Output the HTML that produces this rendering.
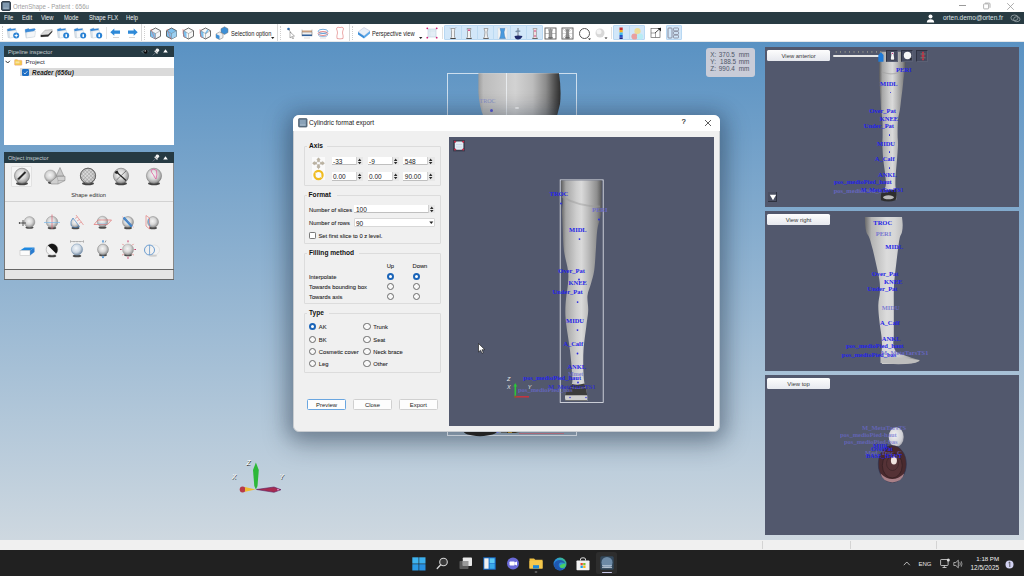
<!DOCTYPE html>
<html><head><meta charset="utf-8">
<style>
*{margin:0;padding:0;box-sizing:border-box}
html,body{width:1024px;height:576px;overflow:hidden;background:#fff}
body{font-family:"Liberation Sans",sans-serif;position:relative}
.a{position:absolute}
.t{position:absolute;white-space:nowrap;line-height:1}
</style></head><body>
<!-- ===== MAIN BG ===== -->
<div class="a" style="left:0;top:42px;width:1024px;height:498px;background:linear-gradient(#5a92c3,#ced8e0)"></div>
<!-- center leg top -->
<div class="a" style="left:446.6px;top:72.6px;width:130px;height:50px;border:0.6px solid rgba(225,235,245,.85);border-bottom:none"></div>
<svg class="a" style="left:476px;top:72px" width="90" height="46"><defs><linearGradient id="lg1" x1="0" x2="1"><stop offset="0" stop-color="#9c9c9c"/><stop offset="0.06" stop-color="#bcbcbc"/><stop offset="0.45" stop-color="#d2d2d2"/><stop offset="0.66" stop-color="#bdbdbd"/><stop offset="0.82" stop-color="#8c8c8c"/><stop offset="0.93" stop-color="#505050"/><stop offset="1" stop-color="#2e2e2e"/></linearGradient></defs><path d="M2.4 1.3H83Q85.5 18 84 32Q82 40 80.5 46H8Q3 34 2.4 20Z" fill="url(#lg1)"/></svg>
<div class="a" style="left:506.3px;top:73px;width:0.7px;height:45px;background:rgba(235,238,242,.9)"></div>
<div class="t" style="left:479.5px;top:98px;font-size:6px;color:#8890c8;font-family:'Liberation Serif',serif">TROC</div>
<div class="a" style="left:490px;top:108.5px;width:3px;height:3px;border-radius:50%;background:#5a5ad8"></div>
<div class="a" style="left:515px;top:107px;width:4px;height:1.6px;border-radius:50%;background:#f4f4f4"></div>
<!-- dialog shadow -->
<div class="a" style="left:293px;top:115px;width:427px;height:316px;border-radius:6px;box-shadow:0 0 16px 6px rgba(30,50,80,.17),0 8px 26px 4px rgba(20,30,45,.36)"></div>
<!-- foot bottom below dialog -->
<div class="a" style="left:447px;top:425px;width:130px;height:10.5px;border:0.6px solid rgba(200,206,214,.9);border-top:none"></div>
<svg class="a" style="left:460px;top:430px" width="70" height="7"><path d="M3 0.5Q4 5.5 20 6.2Q36 5.5 38 0.5Z" fill="#222"/><circle cx="37.5" cy="2" r="1" fill="#6a6ae0"/><path d="M41 1.8H47M47 2.3H55Q58 1.5 61 1.5" stroke="#3a3020" stroke-width="1.2"/><path d="M48 2.5H52" stroke="#b09030" stroke-width="0.8"/></svg>
<div class="a" style="left:519px;top:432.8px;width:45px;height:0.9px;background:#a86878"></div>
<!-- axis triad -->
<svg class="a" style="left:230px;top:456px" width="60" height="40"><path d="M25.9 6.5L28.8 14L27.5 30L25.9 33.5L24.3 30L23 14Z" fill="#2db838"/><circle cx="12.6" cy="33.5" r="2.9" fill="#b83a48"/><path d="M15 31L25.5 33.4L15 35.8Z" fill="#f0bc30"/><path d="M26.5 33.5L44 31L51 33.7L44 36.3Z" fill="#a62a50" stroke="#5a2060" stroke-width="0.6"/><circle cx="48" cy="33.6" r="0.9" fill="#e890d0"/></svg>
<div class="t" style="left:246.5px;top:459.5px;font-size:6.5px;color:#fff;font-style:italic;text-shadow:0.5px 0.5px 0.6px #333">Z</div>
<div class="t" style="left:232px;top:474px;font-size:6.5px;color:#fff;font-style:italic;text-shadow:0.5px 0.5px 0.6px #333">X</div>
<div class="t" style="left:279.5px;top:474px;font-size:6.5px;color:#fff;font-style:italic;text-shadow:0.5px 0.5px 0.6px #333">Y</div>
<!-- coordinate box -->
<div class="a" style="left:706.2px;top:48.4px;width:48.8px;height:28.4px;border-radius:3px;background:#c9ccd8"></div>
<div class="t" style="left:710.3px;top:51.8px;font-size:6.4px;color:#4e5666;line-height:6.9px">X:<br>Y:<br>Z:</div>
<div class="t" style="left:718.8px;top:51.8px;font-size:6.4px;color:#4e5666;line-height:6.9px">370.5<br>&thinsp;188.5<br>990.4</div>
<div class="t" style="left:738.8px;top:51.8px;font-size:6.4px;color:#4e5666;line-height:6.9px">mm<br>mm<br>mm</div>
<!-- ===== STATUS BAR ===== -->
<div class="a" style="left:0;top:540px;width:1024px;height:10px;background:#f0f0f0"></div>
<div class="a" style="left:761.5px;top:541px;width:0.6px;height:8px;background:#d4d4d4"></div>
<div class="a" style="left:849.5px;top:541px;width:0.6px;height:8px;background:#d4d4d4"></div>
<div class="a" style="left:936px;top:541px;width:0.6px;height:8px;background:#d4d4d4"></div>
<!-- ===== TITLE BAR ===== -->
<div class="a" style="left:0;top:0;width:1024px;height:12px;background:#fff"></div>
<svg class="a" style="left:1px;top:1.3px" width="10" height="10"><rect x="0.5" y="0.5" width="9" height="9" rx="1.5" fill="#4a5e70" stroke="#34404c"/><rect x="1.8" y="1.8" width="6.4" height="6.4" fill="#7f98ae"/><path d="M2.5 7.2H7.5" stroke="#c8d4de" stroke-width="0.5"/></svg>
<div class="t" style="left:12.5px;top:3.7px;font-size:6.9px;color:#a0a0a0;transform:scaleX(0.885);transform-origin:0 0">OrtenShape - Patient : 656u</div>
<div class="a" style="left:959px;top:5px;width:7px;height:0.9px;background:#9a9a9a"></div>
<svg class="a" style="left:982.5px;top:2.3px" width="8" height="8"><rect x="0.6" y="1.9" width="5" height="5" rx="0.6" fill="none" stroke="#a0a0a0" stroke-width="0.8"/><path d="M2 1.1H6.2Q7 1.1 7 1.9V5.8" fill="none" stroke="#a0a0a0" stroke-width="0.8"/></svg>
<svg class="a" style="left:1006px;top:1.5px" width="9" height="9"><path d="M1.2 1.2L7.8 7.8M7.8 1.2L1.2 7.8" stroke="#999" stroke-width="0.8"/></svg>

<!-- ===== MENU BAR ===== -->
<div class="a" style="left:0;top:12px;width:1024px;height:12px;background:#283b43"></div>
<div class="t" style="left:4.4px;top:15.1px;font-size:6.6px;color:#eef0f2;transform:scaleX(0.88);transform-origin:0 0">File</div>
<div class="t" style="left:22.3px;top:15.1px;font-size:6.6px;color:#eef0f2;transform:scaleX(0.88);transform-origin:0 0">Edit</div>
<div class="t" style="left:41.4px;top:15.1px;font-size:6.6px;color:#eef0f2;transform:scaleX(0.88);transform-origin:0 0">View</div>
<div class="t" style="left:63.7px;top:15.1px;font-size:6.6px;color:#eef0f2;transform:scaleX(0.88);transform-origin:0 0">Mode</div>
<div class="t" style="left:88.6px;top:15.1px;font-size:6.6px;color:#eef0f2;transform:scaleX(0.88);transform-origin:0 0">Shape FLX</div>
<div class="t" style="left:125.8px;top:15.1px;font-size:6.6px;color:#eef0f2;transform:scaleX(0.88);transform-origin:0 0">Help</div>
<svg class="a" style="left:926px;top:13.5px" width="9" height="9"><circle cx="4.5" cy="2.6" r="2" fill="#fff"/><path d="M0.8 8.6Q1 5.3 4.5 5.3Q8 5.3 8.2 8.6Z" fill="#fff"/></svg>
<div class="t" style="left:943px;top:15.2px;font-size:6.5px;color:#dfe4e7">orten.demo@orten.fr</div>
<svg class="a" style="left:1010px;top:13.5px" width="11" height="9"><ellipse cx="4.5" cy="3.8" rx="3.6" ry="2.8" fill="none" stroke="#9aa4aa" stroke-width="0.8"/><ellipse cx="6.8" cy="5.2" rx="3.2" ry="2.5" fill="none" stroke="#9aa4aa" stroke-width="0.8"/></svg>

<!-- ===== TOOLBAR ===== -->
<div class="a" style="left:0;top:24px;width:1024px;height:18px;background:#fff"></div>
<div class="a" style="left:0;top:40.7px;width:1024px;height:1.3px;background:#e6e8ea"></div>
<!-- dotted separators -->
<div class="a" style="left:2px;top:26px;width:1px;height:14px;border-left:1px dotted #cfcfcf"></div>
<div class="a" style="left:106px;top:27px;width:1px;height:12px;background:#e4e4e4"></div>
<div class="a" style="left:141px;top:24px;width:1px;height:17px;background:#d8d8d8"></div>
<div class="a" style="left:144px;top:26px;width:1px;height:14px;border-left:1px dotted #cfcfcf"></div>
<div class="a" style="left:276.5px;top:24px;width:1px;height:17px;background:#d8d8d8"></div>
<div class="a" style="left:279.5px;top:26px;width:1px;height:14px;border-left:1px dotted #cfcfcf"></div>
<div class="a" style="left:348.5px;top:24px;width:1px;height:17px;background:#d8d8d8"></div>
<div class="a" style="left:351.5px;top:26px;width:1px;height:14px;border-left:1px dotted #cfcfcf"></div>
<div class="a" style="left:441.5px;top:27px;width:1px;height:12px;background:#e0e0e0"></div>
<div class="a" style="left:611px;top:27px;width:1px;height:12px;background:#e0e0e0"></div>
<!-- folder icons -->
<svg class="a" style="left:6px;top:27px" width="14" height="12"><path d="M1.2 2.2L4.6 1.2L5.6 2L9.6 1.4L10 9.2L2.2 10.6Z" fill="#dfe6ee" stroke="#9fb0c0" stroke-width="0.4"/><path d="M1.2 2.2L4.6 1.2L5.6 2L9.6 1.4L9.4 3L1.6 4.2Z" fill="#3a8ad8"/><path d="M3.2 4.2L10.4 3.4L10.6 9.6L3.6 11.2Z" fill="#f6f8fa" stroke="#b8c4d0" stroke-width="0.35"/><circle cx="10.2" cy="8.6" r="3" fill="#2a82d4"/><path d="M10.2 6.4L10.8 8L12.4 8.6L10.8 9.2L10.2 10.8L9.6 9.2L8 8.6L9.6 8Z" fill="#fff"/></svg>
<svg class="a" style="left:24px;top:27px" width="13" height="12"><path d="M1 2.5L4.5 1.5L5.5 2.3L10.5 1.5L10.5 9.5L2 10.8Z" fill="#dfe6ee" stroke="#9fb0c0" stroke-width="0.4"/><path d="M1 2.5L4.5 1.5L5.5 2.3L10.5 1.5L11.8 2.2L9 4.8L1.4 5.6Z" fill="#3a8ad8"/><path d="M3 5.2L11.6 4L10.8 9.8L2.4 11Z" fill="#f4f6f8" stroke="#b8c4d0" stroke-width="0.35"/></svg>
<svg class="a" style="left:40px;top:28px" width="13" height="10"><path d="M0.8 6.8L5 2.2L12.2 1.6L12.2 3.8L8.2 8.4L0.8 8.8Z" fill="#dcdcdc" stroke="#888" stroke-width="0.4"/><path d="M0.8 7L8.2 6.6L12.2 2.8V4L8.2 8.4L0.8 8.9Z" fill="#2e2e2e"/></svg>
<svg class="a" style="left:56px;top:27px" width="14" height="12"><path d="M1.2 2.2L4.6 1.2L5.6 2L9.6 1.4L10 9.2L2.2 10.6Z" fill="#dfe6ee" stroke="#9fb0c0" stroke-width="0.4"/><path d="M1.2 2.2L4.6 1.2L5.6 2L9.6 1.4L9.4 3L1.6 4.2Z" fill="#3a8ad8"/><path d="M3.2 4.2L10.4 3.4L10.6 9.6L3.6 11.2Z" fill="#f6f8fa" stroke="#b8c4d0" stroke-width="0.35"/><circle cx="10.2" cy="8.6" r="3" fill="#2a82d4"/><rect x="9.4" y="7" width="1.6" height="3.2" rx="0.8" fill="#fff"/></svg>
<svg class="a" style="left:72.5px;top:27px" width="14" height="12"><path d="M1.2 2.2L4.6 1.2L5.6 2L9.6 1.4L10 9.2L2.2 10.6Z" fill="#dfe6ee" stroke="#9fb0c0" stroke-width="0.4"/><path d="M1.2 2.2L4.6 1.2L5.6 2L9.6 1.4L9.4 3L1.6 4.2Z" fill="#3a8ad8"/><path d="M3.2 4.2L10.4 3.4L10.6 9.6L3.6 11.2Z" fill="#f6f8fa" stroke="#b8c4d0" stroke-width="0.35"/><circle cx="10.2" cy="8.6" r="3" fill="#2a82d4"/><rect x="9.4" y="7" width="1.6" height="3.2" rx="0.8" fill="#fff"/></svg>
<svg class="a" style="left:89px;top:27px" width="14" height="12"><path d="M1.2 2.2L4.6 1.2L5.6 2L9.6 1.4L10 9.2L2.2 10.6Z" fill="#dfe6ee" stroke="#9fb0c0" stroke-width="0.4"/><path d="M1.2 2.2L4.6 1.2L5.6 2L9.6 1.4L9.4 3L1.6 4.2Z" fill="#3a8ad8"/><path d="M3.2 4.2L10.4 3.4L10.6 9.6L3.6 11.2Z" fill="#f6f8fa" stroke="#b8c4d0" stroke-width="0.35"/><circle cx="10.2" cy="8.6" r="3" fill="#2a82d4"/><rect x="9.4" y="7" width="1.6" height="3.2" rx="0.8" fill="#fff"/></svg>
<!-- arrows -->
<svg class="a" style="left:110px;top:28px" width="11" height="11"><path d="M0.3 4.2L4.3 0.6V2.6H10V5.8H4.3V7.8Z" fill="#2f8ad8"/><path d="M3 9.5H9" stroke="#bbb" stroke-width="0.6"/></svg>
<svg class="a" style="left:127px;top:28px" width="11" height="11"><path d="M10.7 4.2L6.7 0.6V2.6H1V5.8H6.7V7.8Z" fill="#2f8ad8"/><path d="M2 9.5H8" stroke="#bbb" stroke-width="0.6"/></svg>
<!-- hex cubes -->
<svg class="a" style="left:149px;top:26.5px" width="13" height="13"><path d="M6.5 1L11.5 3.7V9.3L6.5 12L1.5 9.3V3.7Z" fill="#f4f6f8" stroke="#444" stroke-width="0.8"/><path d="M1.5 3.7L6.5 6.5V12L1.5 9.3Z" fill="#7cc0ee"/><path d="M2 2L6 12" stroke="#e06060" stroke-width="0.5"/><path d="M6.5 6.5L1.8 3.9M6.5 6.5L11.2 3.9M6.5 6.5V11.8" stroke="#777" stroke-width="0.45"/></svg>
<svg class="a" style="left:165px;top:26.5px" width="13" height="13"><path d="M6.5 1L11.5 3.7V9.3L6.5 12L1.5 9.3V3.7Z" fill="#7cc0ee" stroke="#444" stroke-width="0.8"/><path d="M6.5 6.5V12L11.5 9.3V3.7Z" fill="#9cd0f2"/><path d="M2 2L6 12" stroke="#e06060" stroke-width="0.5"/><path d="M6.5 6.5L1.8 3.9M6.5 6.5L11.2 3.9M6.5 6.5V11.8" stroke="#777" stroke-width="0.45"/></svg>
<svg class="a" style="left:181.5px;top:26.5px" width="13" height="13"><path d="M6.5 1L11.5 3.7V9.3L6.5 12L1.5 9.3V3.7Z" fill="#f8f8f8" stroke="#444" stroke-width="0.8"/><path d="M1.5 3.7L4.5 5V11L1.5 9.3Z" fill="#7cc0ee"/><path d="M1 2Q0 6 3 11" fill="none" stroke="#e06060" stroke-width="0.5"/><path d="M6.5 6.5L1.8 3.9M6.5 6.5L11.2 3.9M6.5 6.5V11.8" stroke="#777" stroke-width="0.45"/></svg>
<svg class="a" style="left:198.5px;top:26.5px" width="13" height="13"><path d="M6.5 1L11.5 3.7V9.3L6.5 12L1.5 9.3V3.7Z" fill="#f8f8f8" stroke="#444" stroke-width="0.8"/><path d="M1.5 3.7L4.5 5V11L1.5 9.3Z" fill="#7cc0ee"/><path d="M6.5 6.5L9 3" stroke="#7cc0ee" stroke-width="1.5"/><path d="M1 2Q0 6 3 11" fill="none" stroke="#e06060" stroke-width="0.5"/><path d="M6.5 6.5L1.8 3.9M6.5 6.5L11.2 3.9M6.5 6.5V11.8" stroke="#777" stroke-width="0.45"/></svg>
<!-- selection option -->
<svg class="a" style="left:215px;top:26px" width="14" height="14"><path d="M9.5 0.8L13 2.7V6.5L9.5 8.4L6 6.5V2.7Z" fill="#3d8fd6" stroke="#777" stroke-width="0.5"/><path d="M4.5 6L8 7.9V11.7L4.5 13.6L1 11.7V7.9Z" fill="#f0f0f0" stroke="#777" stroke-width="0.5"/><path d="M1 7.9L4.5 9.8V13.6L1 11.7Z" fill="#3d8fd6"/></svg>
<div class="t" style="left:231.2px;top:30.9px;font-size:6.3px;color:#1a1a1a;transform:scaleX(0.9);transform-origin:0 0">Selection option</div>
<svg class="a" style="left:271px;top:37px" width="4" height="3"><path d="M0 0H3.4L1.7 2Z" fill="#222"/></svg>
<!-- pick icons -->
<svg class="a" style="left:286px;top:27px" width="10" height="12"><circle cx="2.5" cy="2" r="1.3" fill="#2e6db0"/><path d="M2.5 2L5 6" stroke="#555" stroke-width="0.5"/><path d="M4 5L8.5 9L6.5 9.3L7.5 11.5L6.5 11.8L5.5 9.7L4 11Z" fill="#fff" stroke="#666" stroke-width="0.5"/></svg>
<svg class="a" style="left:301px;top:28px" width="12" height="11"><rect x="1" y="2.5" width="10" height="2" fill="#c9a080"/><rect x="1" y="4.5" width="10" height="3" fill="#f0f0f0" stroke="#999" stroke-width="0.3"/><rect x="1" y="6.5" width="10" height="1.6" fill="#2e5f9a"/><path d="M1 1.5V8.2M11 1.5V8.2" stroke="#666" stroke-width="0.4"/><path d="M3 10H9" stroke="#aaa" stroke-width="0.4"/></svg>
<svg class="a" style="left:317px;top:28px" width="12" height="11"><ellipse cx="6" cy="3.3" rx="4.8" ry="2" fill="none" stroke="#3a86c8" stroke-width="0.7"/><ellipse cx="6" cy="5.5" rx="4.8" ry="2" fill="none" stroke="#d85a5a" stroke-width="0.7"/><ellipse cx="6" cy="7" rx="4.8" ry="1.6" fill="none" stroke="#3a86c8" stroke-width="0.5"/><path d="M3 10H9" stroke="#aaa" stroke-width="0.4"/></svg>
<svg class="a" style="left:335px;top:26px" width="10" height="14"><path d="M3 1.2Q5 2 7 1.2Q8.5 1.5 8.5 3Q7.5 5 7.5 7Q8.5 10 8 12.5Q5 13.3 2 12.5Q1.5 10 2.5 7Q2.5 5 1.5 3Q1.5 1.5 3 1.2Z" fill="#fff" stroke="#de7070" stroke-width="0.6"/></svg>
<!-- perspective -->
<svg class="a" style="left:356px;top:26px" width="15" height="14"><path d="M2 6L8 1.5L14 5L8 10Z" fill="#e8f0f8" stroke="#aac" stroke-width="0.4"/><path d="M2 6L8 10V12.5L2 8.5Z" fill="#3a8ed8"/><path d="M8 10L14 5V7.5L8 12.5Z" fill="#5aa8e8"/></svg>
<div class="t" style="left:372.2px;top:30.9px;font-size:6.3px;color:#1a1a1a;transform:scaleX(0.9);transform-origin:0 0">Perspective view</div>
<svg class="a" style="left:419px;top:37px" width="4" height="3"><path d="M0 0H3.4L1.7 2Z" fill="#222"/></svg>
<svg class="a" style="left:426px;top:27px" width="12" height="12"><rect x="2" y="2" width="8" height="8" fill="#e4eef6" stroke="#b0c4d4" stroke-width="0.5"/><path d="M4 2V10M2 4H10" stroke="#c8d8e4" stroke-width="0.4"/><circle cx="1.3" cy="1.3" r="0.9" fill="#cc2277"/><circle cx="10.7" cy="1.3" r="0.9" fill="#cc2277"/><circle cx="1.3" cy="10.7" r="0.9" fill="#cc2277"/><circle cx="10.7" cy="10.7" r="0.9" fill="#cc2277"/></svg>
<!-- highlighted view buttons -->
<div class="a" style="left:444px;top:25.2px;width:98.5px;height:15.3px;background:#d2e7f9;border:0.6px solid #b8d8f3;border-radius:1px"></div>
<div class="a" style="left:460.5px;top:25.2px;width:0.6px;height:15.3px;background:#bcdaf2"></div>
<div class="a" style="left:476.8px;top:25.2px;width:0.6px;height:15.3px;background:#bcdaf2"></div>
<div class="a" style="left:493.4px;top:25.2px;width:0.6px;height:15.3px;background:#bcdaf2"></div>
<div class="a" style="left:509.5px;top:25.2px;width:0.6px;height:15.3px;background:#bcdaf2"></div>
<div class="a" style="left:526.3px;top:25.2px;width:0.6px;height:15.3px;background:#bcdaf2"></div>
<svg class="a" style="left:448px;top:26.5px" width="10" height="13"><path d="M3 1.5H7L6.5 3.5V10L7.5 11.5H2.5L3.5 10V3.5Z" fill="#f2f2f2" stroke="#777" stroke-width="0.6"/><path d="M2.5 11.5H7.5" stroke="#444" stroke-width="1"/><path d="M7 1L8.5 0.5M1.5 1L3 1.5" stroke="#99a" stroke-width="0.4"/></svg>
<svg class="a" style="left:464px;top:26.5px" width="10" height="13"><path d="M3 1.5H7L6.5 3.5V10L7.5 11.5H2.5L3.5 10V3.5Z" fill="#f2f2f2" stroke="#777" stroke-width="0.6"/><circle cx="5" cy="3.2" r="0.9" fill="#d0307a"/><path d="M2.5 11.5H7.5" stroke="#555" stroke-width="1"/></svg>
<svg class="a" style="left:481px;top:26.5px" width="10" height="13"><path d="M3 1.5H7L6 5L6.5 9.5L7.5 11.5H2.5L3.5 9.5L4 5Z" fill="#f0f0f0" stroke="#777" stroke-width="0.6"/><path d="M2.5 11.5H7.5" stroke="#666" stroke-width="1"/></svg>
<svg class="a" style="left:496.5px;top:26.5px" width="11" height="13"><rect x="1" y="1" width="9" height="11" fill="#f4f4f4" stroke="#ccc" stroke-width="0.3"/><path d="M3 1.5H8L7 5L7.5 9L8.5 11.5H2.5L3.5 9L4 5Z" fill="#4a9ade" stroke="#2e6aa8" stroke-width="0.4"/></svg>
<svg class="a" style="left:513px;top:26.5px" width="11" height="13"><path d="M5 1V11" stroke="#556" stroke-width="0.8"/><path d="M2.5 4Q5 2.5 8 4Q5 6 2.5 5Z" fill="#7890a8"/><path d="M1.5 9Q5 8 9.5 9Q8 12.5 5 12.5Q2 12.5 1.5 9Z" fill="#1e2a6a"/></svg>
<svg class="a" style="left:530px;top:26.5px" width="10" height="13"><path d="M3 1.5H7L6.5 3.5V10L7.5 11.5H2.5L3.5 10V3.5Z" fill="#f0dede" stroke="#888" stroke-width="0.6"/><circle cx="5" cy="4" r="0.8" fill="#d0307a"/><circle cx="5" cy="9" r="0.8" fill="#d0307a"/><path d="M2.5 11.5H7.5" stroke="#666" stroke-width="1"/></svg>
<!-- grid icons -->
<svg class="a" style="left:544px;top:26.5px" width="13" height="13"><rect x="1" y="1" width="11" height="11" fill="#fff" stroke="#555" stroke-width="0.9"/><path d="M1 6.5H12M6.5 1V12" stroke="#777" stroke-width="0.45"/><path d="M4.5 2.5H8.5L8 4.5V9.5L8.5 11H4.5L5 9.5V4.5Z" fill="#9a9a9a" stroke="#666" stroke-width="0.4"/><path d="M4.5 11H8.5" stroke="#444" stroke-width="0.8"/></svg>
<svg class="a" style="left:561px;top:26.5px" width="13" height="13"><rect x="1" y="1" width="11" height="11" fill="#fff" stroke="#555" stroke-width="0.9"/><path d="M1 1L12 12M12 1L1 12M1 6.5H12M6.5 1V12" stroke="#999" stroke-width="0.35"/><path d="M4.5 2.5H8.5L7.5 5L8 9L8.5 11H4.5L5 9L5.5 5Z" fill="#8a8a8a" stroke="#666" stroke-width="0.4"/><path d="M4.5 11H8.5" stroke="#444" stroke-width="0.8"/></svg>
<svg class="a" style="left:577.5px;top:26.5px" width="14" height="14"><circle cx="6.5" cy="6.5" r="5" fill="none" stroke="#555" stroke-width="1"/><path d="M10 11.5H13L11.5 13Z" fill="#222"/></svg>
<svg class="a" style="left:594px;top:27px" width="14" height="13"><circle cx="6" cy="6" r="4.5" fill="#d8d8d8"/><circle cx="5" cy="4.8" r="2.5" fill="#f4f4f4"/><path d="M10.5 10.5H13.5L12 12Z" fill="#222"/></svg>
<!-- colorbar & circles -->
<div class="a" style="left:612.5px;top:25.2px;width:32.5px;height:15.3px;background:#d2e7f9;border:0.6px solid #b8d8f3;border-radius:1px"></div>
<div class="a" style="left:628.8px;top:25.2px;width:0.6px;height:15.3px;background:#bcdaf2"></div>
<svg class="a" style="left:618px;top:27px" width="7" height="13"><rect x="1.5" y="0.5" width="3.2" height="2.5" fill="#c83030"/><rect x="1.5" y="3" width="3.2" height="2.5" fill="#f0b020"/><rect x="1.5" y="5.5" width="3.2" height="2.5" fill="#40b8e8"/><rect x="1.5" y="8" width="3.2" height="2.5" fill="#2050c8"/><rect x="1.5" y="10.5" width="3.2" height="1.5" fill="#202080"/></svg>
<svg class="a" style="left:630px;top:26.5px" width="14" height="14"><circle cx="7.5" cy="4.2" r="3.1" fill="#ecdc98"/><circle cx="4.5" cy="9.5" r="3.1" fill="#e8a0a0"/><circle cx="10" cy="9.5" r="3.1" fill="#b8ecf4"/></svg>
<svg class="a" style="left:650px;top:27px" width="13" height="12"><rect x="1" y="1.5" width="9" height="9" fill="#fff" stroke="#666" stroke-width="0.7"/><path d="M1 6H5.5V10.5" fill="none" stroke="#666" stroke-width="0.6"/><path d="M5 6L10.5 1" stroke="#222" stroke-width="0.8"/><path d="M7.5 1H11V4.5Z" fill="#222"/></svg>
<div class="a" style="left:665.5px;top:25.2px;width:16px;height:15.3px;background:#d2e7f9;border:0.6px solid #b8d8f3;border-radius:1px"></div>
<svg class="a" style="left:667px;top:27px" width="13" height="12"><rect x="1" y="1" width="4" height="10" rx="0.8" fill="none" stroke="#778" stroke-width="0.8"/><rect x="6.5" y="1" width="5" height="2.8" rx="0.6" fill="none" stroke="#778" stroke-width="0.7"/><rect x="6.5" y="4.6" width="5" height="2.8" rx="0.6" fill="none" stroke="#778" stroke-width="0.7"/><rect x="6.5" y="8.2" width="5" height="2.8" rx="0.6" fill="none" stroke="#778" stroke-width="0.7"/></svg>
<!-- ===== SVG DEFS ===== -->
<svg width="0" height="0" style="position:absolute"><defs>
<radialGradient id="sph" cx="0.45" cy="0.42" r="0.6"><stop offset="0" stop-color="#f4f4f4"/><stop offset="0.5" stop-color="#d8d8d8"/><stop offset="0.85" stop-color="#a4a4a4"/><stop offset="1" stop-color="#7a7a7a"/></radialGradient>
<radialGradient id="sphb" cx="0.42" cy="0.38" r="0.62"><stop offset="0" stop-color="#f4f8fc"/><stop offset="0.6" stop-color="#cdd8e4"/><stop offset="1" stop-color="#7a8ea4"/></radialGradient>
<pattern id="mesh" width="2.6" height="2.6" patternUnits="userSpaceOnUse" patternTransform="rotate(45)"><rect width="2.6" height="2.6" fill="#d8d8d8"/><path d="M0 0H2.6M0 0V2.6" stroke="#505050" stroke-width="0.55"/></pattern>
</defs></svg>

<!-- ===== PIPELINE INSPECTOR ===== -->
<div class="a" style="left:4px;top:46px;width:170px;height:98.5px;background:#fff"></div>
<div class="a" style="left:4px;top:46px;width:170px;height:10.7px;background:#263a43"></div>
<div class="t" style="left:7.9px;top:49.2px;font-size:6.1px;color:#c8ced2;transform:scaleX(0.92);transform-origin:0 0">Pipeline inspector</div>
<svg class="a" style="left:140.5px;top:48px" width="8" height="7"><path d="M0.6 3.6Q3.5 1 7.4 3.2Q4.5 6.8 0.6 3.6Z" fill="none" stroke="#8a9aa4" stroke-width="0.5"/><circle cx="4.6" cy="3.8" r="2" fill="#0a0a0a"/><circle cx="4.2" cy="2.9" r="0.7" fill="#fff"/></svg>
<svg class="a" style="left:151.5px;top:47.5px" width="8" height="8"><path d="M4.2 0.8Q6.8 -0.2 7.4 2.6L5.6 4.6L3.4 2.4Z" fill="#f2f2f2"/><path d="M2.2 3.2L5 6L6 5L3.2 2.2Z" fill="#e0e0e0"/><path d="M3.2 5L0.8 7.4" stroke="#aab" stroke-width="0.5"/></svg>
<svg class="a" style="left:163.3px;top:49.2px" width="5" height="4"><path d="M0.2 3.6L2.5 0.3L4.8 3.6Z" fill="#fff"/></svg>
<svg class="a" style="left:5px;top:60px" width="6" height="4"><path d="M0.5 0.8L2.7 3L4.9 0.8" fill="none" stroke="#333" stroke-width="1"/></svg>
<svg class="a" style="left:13.8px;top:59.2px" width="9" height="7"><path d="M0.5 1.5Q0.5 0.4 1.6 0.4H3.2L4 1.3H7.2Q8 1.3 8 2.2V5.5Q8 6.3 7.2 6.3H1.3Q0.5 6.3 0.5 5.5Z" fill="#f3c94e" stroke="#e8a0a0" stroke-width="0.4"/><rect x="1.5" y="2.4" width="4" height="2" fill="#f8e4a0"/></svg>
<div class="t" style="left:25.5px;top:59.3px;font-size:6.2px;color:#262a34">Project</div>
<div class="a" style="left:20.2px;top:68.2px;width:153.8px;height:8.3px;background:#dadada"></div>
<svg class="a" style="left:22px;top:68.8px" width="7.2" height="7.2"><rect x="0" y="0" width="7" height="7" rx="1.2" fill="#1f6fc5"/><path d="M1.7 3.7L3 5L5.4 2.2" fill="none" stroke="#fff" stroke-width="0.7"/></svg>
<div class="t" style="left:32.1px;top:69.6px;font-size:6.3px;color:#1a1a1a;font-weight:bold;font-style:italic">Reader (656u)</div>

<!-- ===== OBJECT INSPECTOR ===== -->
<div class="a" style="left:4px;top:152.3px;width:170px;height:127.4px;background:#f0f0f0;border-left:0.8px solid #777;border-right:0.8px solid #888"></div>
<div class="a" style="left:4px;top:152.3px;width:170px;height:10.5px;background:#263a43"></div>
<div class="t" style="left:8px;top:155.2px;font-size:6.1px;color:#c8ced2;transform:scaleX(0.92);transform-origin:0 0">Object inspector</div>
<svg class="a" style="left:151.5px;top:153.5px" width="8" height="8"><path d="M4.2 0.8Q6.8 -0.2 7.4 2.6L5.6 4.6L3.4 2.4Z" fill="#f2f2f2"/><path d="M2.2 3.2L5 6L6 5L3.2 2.2Z" fill="#e0e0e0"/><path d="M3.2 5L0.8 7.4" stroke="#aab" stroke-width="0.5"/></svg>
<svg class="a" style="left:163.3px;top:155.5px" width="5" height="4"><path d="M0.2 3.6L2.5 0.3L4.8 3.6Z" fill="#fff"/></svg>
<!-- big icons -->
<div class="a" style="left:10.6px;top:165.7px;width:21.5px;height:21.5px;background:#f6f6f6;border:0.5px solid #e2e2e2;border-radius:1px"></div>
<svg class="a" style="left:12px;top:166px" width="20" height="20"><ellipse cx="10" cy="17.5" rx="6" ry="1.8" fill="#262626" opacity="0.85"/><circle cx="10" cy="9.8" r="7.6" fill="url(#sph)" stroke="#666" stroke-width="0.5"/><path d="M6 13.5L13.5 6" stroke="#2a2a2a" stroke-width="1.9"/><path d="M5.2 14.3L6.2 13.3" stroke="#999" stroke-width="1.9"/></svg>
<svg class="a" style="left:43px;top:164px" width="24" height="22"><ellipse cx="10" cy="18.5" rx="5" ry="1.6" fill="#262626" opacity="0.85"/><circle cx="7.5" cy="12" r="6" fill="url(#sph)" stroke="#888" stroke-width="0.4"/><path d="M17 3.5L20.8 12H13.2Z" fill="#c8c8c8" stroke="#777" stroke-width="0.5"/><path d="M7.5 18L14 12.5L22 12.3V16.5L15 20L8 20Z" fill="#d0d0d0" stroke="#777" stroke-width="0.5"/><path d="M14 12.5L15 16.5L22 16.5M15 16.5V20" fill="none" stroke="#888" stroke-width="0.4"/></svg>
<svg class="a" style="left:78px;top:166px" width="20" height="20"><ellipse cx="10" cy="17.5" rx="6" ry="1.8" fill="#262626" opacity="0.85"/><circle cx="10" cy="9.8" r="7.6" fill="url(#mesh)" stroke="#666" stroke-width="0.5"/><circle cx="10" cy="9.8" r="7.6" fill="url(#sph)" opacity="0.25"/><circle cx="10" cy="9.8" r="7.6" fill="none" stroke="#555" stroke-width="0.8"/></svg>
<svg class="a" style="left:111px;top:166px" width="20" height="20"><ellipse cx="10" cy="17.5" rx="6" ry="1.8" fill="#262626" opacity="0.85"/><circle cx="10" cy="9.8" r="7.6" fill="url(#sph)" stroke="#666" stroke-width="0.5"/><path d="M5 5.5L15 14.5" stroke="#222" stroke-width="1.1"/><path d="M15 5L5.5 14" stroke="#555" stroke-width="0.7"/><path d="M3.5 6L6.5 4.5L7.5 7L5 8Z" fill="#222"/></svg>
<svg class="a" style="left:144px;top:166px" width="20" height="20"><ellipse cx="10" cy="17.5" rx="6" ry="1.8" fill="#262626" opacity="0.85"/><circle cx="10" cy="9.8" r="7.6" fill="url(#sph)" stroke="#777" stroke-width="0.5"/><path d="M7 4.2Q10 2 12.5 4.5Q13.5 9 12 13Q11 12.5 9.5 9Q7 6 7 4.2Z" fill="none" stroke="#e060a0" stroke-width="0.8"/></svg>
<div class="t" style="left:71.2px;top:192.5px;font-size:5.7px;color:#303030">Shape edition</div>
<div class="a" style="left:5px;top:201px;width:168px;height:0.8px;background:#d2d2d2"></div>
<!-- small icons row 1 -->
<svg class="a" style="left:17px;top:213px" width="20" height="18"><ellipse cx="12.5" cy="14.5" rx="4" ry="1.3" fill="#222" opacity="0.8"/><circle cx="12.5" cy="9" r="5.4" fill="url(#sph)" stroke="#888" stroke-width="0.4"/><path d="M2 10H9M6 7V13" stroke="#333" stroke-width="0.8"/><path d="M1.5 10L3 9V11Z" fill="#333"/></svg>
<svg class="a" style="left:43px;top:213px" width="18" height="18"><ellipse cx="9" cy="15" rx="4.3" ry="1.3" fill="#222" opacity="0.8"/><circle cx="9" cy="9" r="5.8" fill="url(#sph)" stroke="#888" stroke-width="0.4"/><path d="M9 1.5V16" stroke="#e06070" stroke-width="0.7"/><path d="M1 9.5H17" stroke="#7ab8e8" stroke-width="0.7"/></svg>
<svg class="a" style="left:68px;top:213px" width="18" height="18"><ellipse cx="7.5" cy="15" rx="4" ry="1.3" fill="#222" opacity="0.8"/><path d="M5 5L11.5 13.5Q6 16 3 12.5Q2 8 5 5Z" fill="url(#sph)" stroke="#3a80c8" stroke-width="0.6"/><path d="M8 2L15.5 12" stroke="#e07070" stroke-width="0.6"/><path d="M7 5.5L9.5 4M9 8L11.5 6.5M11 10.5L13.5 9" stroke="#e07070" stroke-width="0.5"/></svg>
<svg class="a" style="left:93px;top:213px" width="20" height="18"><ellipse cx="9.5" cy="14.5" rx="4" ry="1.3" fill="#222" opacity="0.8"/><circle cx="9.5" cy="8.5" r="5.3" fill="url(#sph)" stroke="#888" stroke-width="0.4"/><path d="M1 11.5L5 7H18.5L14.5 11.5Z" fill="none" stroke="#e07070" stroke-width="0.7"/><path d="M4.5 10.8H14" stroke="#8ac0e8" stroke-width="0.6"/></svg>
<svg class="a" style="left:118.5px;top:213px" width="18" height="18"><ellipse cx="9" cy="15" rx="4" ry="1.3" fill="#222" opacity="0.8"/><circle cx="9" cy="9" r="5.5" fill="url(#sph)" stroke="#777" stroke-width="0.4"/><path d="M4.5 4.5L13 13.5" stroke="#2a88d8" stroke-width="2.4"/><path d="M3 3.5L15 14.5" stroke="#e07070" stroke-width="0.4"/></svg>
<svg class="a" style="left:142.5px;top:213px" width="18" height="18"><ellipse cx="10" cy="15" rx="4" ry="1.3" fill="#222" opacity="0.8"/><circle cx="10" cy="9" r="5.5" fill="url(#sph)" stroke="#777" stroke-width="0.4"/><path d="M3 2.5L6.5 5V16L3 13Z" fill="none" stroke="#e07070" stroke-width="0.6"/><path d="M5.5 6Q5 10 7 13" stroke="#5aa0e0" stroke-width="0.8" fill="none"/></svg>
<!-- small icons row 2 -->
<svg class="a" style="left:19px;top:241px" width="18" height="18"><path d="M1 9.5L5.5 6.5H15.5L11 9.5Z" fill="#1e88e0"/><path d="M11 9.5L15.5 6.5V11L11 14.5Z" fill="#2a7cd0"/><rect x="1" y="9.5" width="10" height="5" fill="#fbfbfb" stroke="#aaa" stroke-width="0.4"/></svg>
<svg class="a" style="left:43px;top:241px" width="18" height="18"><ellipse cx="9" cy="15" rx="4.3" ry="1.3" fill="#222" opacity="0.85"/><circle cx="9" cy="8.5" r="5.8" fill="#f4f4f4" stroke="#777" stroke-width="0.4"/><path d="M4.9 4.4A5.8 5.8 0 0 1 13.1 12.6Z" fill="#151515"/></svg>
<svg class="a" style="left:68px;top:239px" width="18" height="20"><ellipse cx="9" cy="17" rx="4.3" ry="1.3" fill="#222" opacity="0.8"/><circle cx="9" cy="10.5" r="5.6" fill="url(#sphb)" stroke="#7090b0" stroke-width="0.5"/><path d="M2.5 2.5H15.5M2.5 1.2V3.8M15.5 1.2V3.8M6 2V3.3M9 2V3.3M12 2V3.3" stroke="#888" stroke-width="0.5"/></svg>
<svg class="a" style="left:93.5px;top:239px" width="18" height="20"><ellipse cx="9" cy="16" rx="4" ry="1.3" fill="#222" opacity="0.8"/><circle cx="9" cy="10.5" r="5.5" fill="url(#sph)" stroke="#777" stroke-width="0.4"/><path d="M9 1.5V4M9 16.5V19" stroke="#3a88d0" stroke-width="0.7"/><path d="M7.8 2.6L9 1L10.2 2.6ZM7.8 17.8L9 19.4L10.2 17.8Z" fill="#3a88d0"/><path d="M11 3.5L12 1.5" stroke="#444" stroke-width="0.5"/></svg>
<svg class="a" style="left:118.5px;top:239px" width="18" height="20"><ellipse cx="9" cy="16" rx="4" ry="1.3" fill="#222" opacity="0.8"/><circle cx="9" cy="10.5" r="5.6" fill="url(#sph)" stroke="#999" stroke-width="0.3"/><g stroke="#e06060" stroke-width="0.7"><path d="M9 1.5V3.5M9 17.5V19.5M1 10.5H3M15 10.5H17M3.4 4.9L4.8 6.3M14.6 4.9L13.2 6.3M3.4 16.1L4.8 14.7M14.6 16.1L13.2 14.7"/></g><g fill="#b03080"><circle cx="9" cy="2" r="0.6"/><circle cx="9" cy="19" r="0.6"/><circle cx="1.6" cy="10.5" r="0.6"/><circle cx="16.4" cy="10.5" r="0.6"/></g></svg>
<svg class="a" style="left:142.5px;top:241px" width="18" height="18"><circle cx="11.5" cy="9" r="5" fill="#f2f2f2" stroke="#ccc" stroke-width="0.4"/><circle cx="6.5" cy="9" r="5" fill="none" stroke="#4a88c8" stroke-width="0.8"/><path d="M6.5 4V14" stroke="#4a88c8" stroke-width="0.6"/><ellipse cx="10" cy="14.8" rx="4" ry="1" fill="#bbb" opacity="0.6"/></svg>
<!-- bottom strip -->
<div class="a" style="left:4px;top:269px;width:170px;height:0.9px;background:#666"></div>
<div class="a" style="left:4.8px;top:269.9px;width:168.4px;height:9px;background:#e4e4e4"></div>
<div class="a" style="left:4px;top:278.9px;width:170px;height:0.9px;background:#666"></div>
<!-- ===== RIGHT VIEWS ===== -->
<svg width="0" height="0" style="position:absolute"><defs>
<linearGradient id="legg" x1="0" x2="1" y1="0" y2="0"><stop offset="0" stop-color="#5e5e5e"/><stop offset="0.12" stop-color="#a6a6a6"/><stop offset="0.38" stop-color="#cecece"/><stop offset="0.5" stop-color="#dadada"/><stop offset="0.66" stop-color="#bdbdbd"/><stop offset="0.88" stop-color="#8e8e8e"/><stop offset="1" stop-color="#585858"/></linearGradient>
<linearGradient id="legr" x1="0" x2="1" y1="0" y2="0"><stop offset="0" stop-color="#6a6a6a"/><stop offset="0.12" stop-color="#b4b4b4"/><stop offset="0.4" stop-color="#dcdcdc"/><stop offset="0.55" stop-color="#d6d6d6"/><stop offset="0.8" stop-color="#b0b0b0"/><stop offset="1" stop-color="#6e6e6e"/></linearGradient>
</defs></svg>
<style>
.lb{position:absolute;white-space:nowrap;line-height:1;margin-top:1.1px;font-family:"Liberation Serif",serif;font-size:6.5px;font-weight:bold;color:#2424e6}
.lf{color:#6a6ad0}
.vb{position:absolute;height:11.3px;width:63px;border-radius:1.5px;background:linear-gradient(#fdfdfd,#e6e8ee);font-size:5.9px;color:#3a3a3a;text-align:center;line-height:12.9px;white-space:nowrap}
.dt{position:absolute;width:1.6px;height:1.6px;background:#2828e0;border-radius:50%}
</style>
<!-- view anterior -->
<div class="a" style="left:764.5px;top:47.2px;width:254.5px;height:159.6px;background:#52586d;overflow:hidden">
 <svg class="a" style="left:0;top:0" width="255" height="160" viewBox="764.5 47.2 255 160">
  <path d="M878.75 52.00C878.8 53.7 878.8 57.3 878.8 62.0C878.8 66.7 878.6 75.3 878.8 80.0C878.9 84.7 879.2 86.7 879.4 90.0C879.6 93.3 879.8 96.7 880.0 100.0C880.2 103.3 880.3 106.7 880.6 110.0C880.9 113.3 881.6 115.8 881.9 120.0C882.1 124.2 882.1 130.8 882.1 135.0C882.1 139.2 881.8 140.8 881.9 145.0C882.0 149.2 882.3 155.0 882.8 160.0C883.3 165.0 884.3 170.8 884.7 175.0C885.1 179.2 885.6 182.5 885.4 185.0C885.2 187.5 884.2 188.3 883.5 190.0C882.8 191.7 881.6 193.4 881.2 195.0C880.8 196.6 881.0 198.9 881.0 199.7L895.80 199.70C895.8 198.9 895.8 196.6 895.8 195.0C895.8 193.4 895.6 191.7 895.5 190.0C895.4 188.3 894.9 187.5 894.9 185.0C894.9 182.5 894.9 179.2 895.2 175.0C895.5 170.8 896.1 165.0 896.5 160.0C896.9 155.0 897.4 149.2 897.5 145.0C897.6 140.8 897.1 139.2 897.1 135.0C897.1 130.8 897.1 124.2 897.5 120.0C897.9 115.8 898.9 113.3 899.4 110.0C899.9 106.7 900.2 103.3 900.6 100.0C901.0 96.7 901.5 93.3 901.9 90.0C902.3 86.7 902.6 83.3 903.0 80.0C903.4 76.7 904.1 73.0 904.4 70.0C904.7 67.0 904.9 65.0 905.0 62.0C905.1 59.0 905.0 53.7 905.0 52.0Z" fill="url(#legg)"/>
  <path d="M882.5 189Q888 192 895.5 189Q897 196 895 200.5Q888 203 880.5 200.5Q879.5 195 882.5 189Z" fill="#2e2e2e"/>
  <ellipse cx="888" cy="197.5" rx="5.5" ry="2" fill="#b8b8b8"/>
  <path d="M881 72Q892 77 904 70" fill="none" stroke="#a0a0a0" stroke-width="1.2" opacity="0.6"/>
 </svg>
</div>
<!-- slider & buttons -->
<div class="a" style="left:833px;top:54.8px;width:48px;height:2.2px;background:#e6e6e6;border-radius:1px"></div>
<svg class="a" style="left:833px;top:50.5px" width="50" height="2"><rect x="2.80" y="0" width="0.7" height="1.8" fill="#a4a490"/><rect x="7.27" y="0" width="0.7" height="1.8" fill="#a4a490"/><rect x="11.74" y="0" width="0.7" height="1.8" fill="#a4a490"/><rect x="16.21" y="0" width="0.7" height="1.8" fill="#a4a490"/><rect x="20.68" y="0" width="0.7" height="1.8" fill="#a4a490"/><rect x="25.15" y="0" width="0.7" height="1.8" fill="#a4a490"/><rect x="29.62" y="0" width="0.7" height="1.8" fill="#a4a490"/><rect x="34.09" y="0" width="0.7" height="1.8" fill="#a4a490"/><rect x="38.56" y="0" width="0.7" height="1.8" fill="#a4a490"/><rect x="43.03" y="0" width="0.7" height="1.8" fill="#a4a490"/><rect x="47.50" y="0" width="0.7" height="1.8" fill="#a4a490"/></svg>
<svg class="a" style="left:877.8px;top:52.3px" width="6" height="10"><path d="M0.3 3L2.9 0.2L5.5 3V9.2Q5.5 9.8 4.9 9.8H0.9Q0.3 9.8 0.3 9.2Z" fill="#1e7ad8"/></svg>
<div class="a" style="left:886.4px;top:49.5px;width:11.6px;height:12px;background:#454a5e;border-top:1px solid #2e3242;border-left:1px solid #2e3242;border-right:0.5px solid #5a6074;border-bottom:0.5px solid #5a6074"></div>
<svg class="a" style="left:888px;top:50.5px" width="9" height="10"><path d="M3 1.2Q4.5 0.6 6 1.2L5.6 3.5L6.2 7.5L5.5 9H3.5L2.8 7.5L3.4 3.5Z" fill="#f4f4f4"/><circle cx="4.5" cy="2.4" r="0.65" fill="#d03080"/><path d="M3.5 9H5.5" stroke="#333" stroke-width="0.6"/></svg>
<div class="a" style="left:901px;top:49.5px;width:12.2px;height:12px;background:#454a5e;border-top:1px solid #2e3242;border-left:1px solid #2e3242;border-right:0.5px solid #5a6074;border-bottom:0.5px solid #5a6074"></div>
<svg class="a" style="left:901.5px;top:50px" width="11" height="11"><circle cx="5.5" cy="5.5" r="3.7" fill="#f6f6f6"/><path d="M7.6 8.6H10L8.8 9.9Z" fill="#111"/></svg>
<div class="a" style="left:916px;top:49.5px;width:12.4px;height:12px;background:#454a5e;border-top:1px solid #2e3242;border-left:1px solid #2e3242;border-right:0.5px solid #5a6074;border-bottom:0.5px solid #5a6074"></div>
<svg class="a" style="left:917.5px;top:50.5px" width="10" height="10"><path d="M2.5 3H7.5M2.5 6.8H7.5" stroke="#9a9a80" stroke-width="0.6"/><path d="M5 0.8V9.2" stroke="#d83040" stroke-width="1"/><path d="M3.5 4.9H6.5" stroke="#d83040" stroke-width="1.2"/><path d="M3.8 1.8L5 0.5L6.2 1.8ZM3.8 8.2L5 9.5L6.2 8.2Z" fill="#d83040"/></svg>
<div class="vb" style="left:767.2px;top:50px">View anterior</div>
<div class="lb" style="left:896px;top:66px">PERI</div>
<div class="lb" style="left:880px;top:79.6px">MIDL</div>
<div class="dt" style="left:889.7px;top:91.8px"></div>
<div class="lb" style="left:869.3px;top:107px">Over_Pat</div>
<div class="lb" style="left:879.7px;top:115.3px">KNEE</div>
<div class="lb" style="left:863.7px;top:121.8px">Under_Pat</div>
<div class="dt" style="left:888.5px;top:134px"></div>
<div class="lb" style="left:877px;top:140px">MIDU</div>
<div class="dt" style="left:888.5px;top:151px"></div>
<div class="lb" style="left:874.7px;top:155.3px">A_Calf</div>
<div class="dt" style="left:888.5px;top:167px"></div>
<div class="lb" style="left:878px;top:171px">ANKL</div>
<div class="lb" style="left:834px;top:178.3px">pos_medioPied_haut</div>
<div class="lb lf" style="left:833.7px;top:187.3px;opacity:.8">pos_medioPied_bas</div>
<div class="lb" style="left:861px;top:186.5px;font-size:5.8px">M_MetaTarsTS1</div>
<div class="a" style="left:767.5px;top:192.2px;width:9.4px;height:9.5px;background:#4a4f62;border-right:0.8px solid #2e3240;border-bottom:0.8px solid #2e3240"></div>
<svg class="a" style="left:768.5px;top:193.5px" width="8" height="7"><path d="M0.8 0.8H7.2L4 6.2Z" fill="#fff"/></svg>

<!-- view right -->
<div class="a" style="left:764.5px;top:211px;width:254.5px;height:160px;background:#52586d;overflow:hidden">
 <svg class="a" style="left:0;top:0" width="255" height="160" viewBox="764.5 211 255 160">
  <path d="M864.40 217.00C864.5 218.3 864.5 222.5 864.7 225.0C864.9 227.5 865.1 229.8 865.8 232.0C866.5 234.2 867.8 235.0 868.9 238.0C870.0 241.0 871.2 245.5 872.4 250.0C873.5 254.5 874.7 260.0 875.8 265.0C876.9 270.0 878.3 275.5 878.9 280.0C879.5 284.5 879.6 287.8 879.4 292.0C879.2 296.2 877.9 300.3 877.8 305.0C877.7 309.7 878.2 315.0 878.8 320.0C879.2 325.0 880.3 330.8 880.8 335.0C881.3 339.2 881.5 341.7 881.5 345.0C881.5 348.3 881.0 352.5 880.9 355.0C880.8 357.5 880.7 358.5 880.8 360.0C880.9 361.5 881.4 363.3 881.5 364.0L900.00 364.00C902.0 363.8 908.8 363.5 912.0 363.0C915.2 362.5 918.5 361.7 919.0 361.0C919.5 360.3 917.2 359.8 915.0 359.0C912.8 358.2 909.0 357.2 905.8 356.0C902.6 354.8 898.1 353.8 896.0 352.0C893.9 350.2 893.5 347.8 893.0 345.0C892.5 342.2 893.2 339.2 893.3 335.0C893.3 330.8 893.3 325.0 893.3 320.0C893.3 315.0 893.3 309.7 893.3 305.0C893.3 300.3 893.2 296.2 893.3 292.0C893.4 287.8 893.5 284.5 893.9 280.0C894.3 275.5 895.0 270.0 895.6 265.0C896.2 260.0 896.8 254.5 897.4 250.0C898.0 245.5 898.5 241.0 899.2 238.0C899.9 235.0 901.0 234.2 901.5 232.0C902.0 229.8 902.2 227.5 902.2 225.0C902.2 222.5 901.6 218.3 901.5 217.0Z" fill="url(#legr)"/>
  <path d="M880 356Q900 357 919.3 360Q918 363.5 905 364Q890 364.5 880 363Z" fill="#bdbdbd"/>
 </svg>
</div>
<div class="vb" style="left:767.1px;top:213.8px">View right</div>
<div class="lb" style="left:873.3px;top:219.3px">TROC</div>
<div class="lb lf" style="left:875.8px;top:229.8px;opacity:.85">PERI</div>
<div class="lb" style="left:885.3px;top:243.4px">MIDL</div>
<div class="lb" style="left:871.7px;top:270.4px">Over_Pat</div>
<div class="lb" style="left:883.9px;top:278.4px">KNEE</div>
<div class="lb" style="left:867.2px;top:285.3px">Under_Pat</div>
<div class="lb lf" style="left:881.7px;top:304.1px;opacity:.8">MIDU</div>
<div class="lb" style="left:879.9px;top:319.2px">A_Calf</div>
<div class="lb" style="left:881.7px;top:334.6px">ANKL</div>
<div class="lb" style="left:846px;top:341.5px">pos_medioPied_haut</div>
<div class="lb" style="left:841.8px;top:350.8px">pos_medioPied_bas</div>
<div class="lb lf" style="left:881px;top:349px;opacity:.85">M_MetaTarsTS1</div>

<!-- view top -->
<div class="a" style="left:764.5px;top:374.5px;width:254.5px;height:160.3px;background:#52586d;overflow:hidden">
 <svg class="a" style="left:0;top:0" width="255" height="161" viewBox="764.5 374.5 255 161">
  <defs><radialGradient id="ftop" cx="0.4" cy="0.4" r="0.7"><stop offset="0" stop-color="#f0f0f2"/><stop offset="0.7" stop-color="#d0d0d6"/><stop offset="1" stop-color="#9a9aa4"/></radialGradient></defs>
  <ellipse cx="895.7" cy="436.5" rx="7.5" ry="9.8" fill="url(#ftop)"/>
  <ellipse cx="891.8" cy="463.5" rx="14" ry="18.5" fill="#4a2a2e" stroke="#2a3050" stroke-width="0.6"/>
  <path d="M880 473Q891.8 484 903.6 473Q902 481 891.8 482Q882 481 880 473Z" fill="#a88088"/>
  <ellipse cx="891.8" cy="465" rx="10" ry="12.5" fill="#553236" stroke="#3a2226" stroke-width="1"/>
  <ellipse cx="892" cy="463" rx="6" ry="7" fill="none" stroke="#3e2428" stroke-width="0.8"/>
  <ellipse cx="893.4" cy="460" rx="3" ry="4" fill="#f0e4e0"/>
 </svg>
</div>
<div class="vb" style="left:767.1px;top:377.7px">View top</div>
<div class="lb lf" style="left:862px;top:424px;opacity:.7">M_MetaTarsTS</div>
<div class="lb lf" style="left:840px;top:431px;opacity:.7">pos_medioPied-haut</div>
<div class="lb lf" style="left:844px;top:438px;opacity:.7">pos_medioPied-bas</div>
<div class="lb" style="left:873px;top:441.5px;font-size:6px">MIDL</div>
<div class="lb" style="left:871px;top:444.5px;font-size:6px">OverPat</div>
<div class="lb lf" style="left:865px;top:449px;opacity:.7">Med_Troc_C</div>
<div class="lb" style="left:866px;top:452px;font-size:6px">BASE_HAUT</div>
<!-- ===== DIALOG ===== -->
<div class="a" style="left:293px;top:115px;width:427px;height:317px;background:#f0f0f0;border-radius:6px;border:0.5px solid #c8ccd0"></div>
<div class="a" style="left:293px;top:115px;width:427px;height:15.8px;background:#fff;border-radius:6px 6px 0 0"></div>
<svg class="a" style="left:297.5px;top:117.6px" width="10" height="10"><rect x="0.5" y="0.5" width="8.6" height="8.6" rx="1" fill="#5d7488" stroke="#3e4c5a" stroke-width="0.6"/><rect x="1.8" y="1.8" width="6" height="6" fill="#8aa2b8"/><path d="M2 7H7.6" stroke="#c8d4de" stroke-width="0.6"/></svg>
<div class="t" style="left:309px;top:119.9px;font-size:6.5px;color:#202020">Cylindric format export</div>
<div class="t" style="left:681.8px;top:118.4px;font-size:7px;color:#2a2a2a;-webkit-text-stroke:0.2px #2a2a2a">?</div>
<svg class="a" style="left:704px;top:118.5px" width="8" height="8"><path d="M1 1L7 7M7 1L1 7" stroke="#333" stroke-width="0.8"/></svg>

<!-- group boxes -->
<div class="a" style="left:303.8px;top:145.5px;width:137px;height:40.5px;border:0.6px solid #dcdcdc;border-radius:1px"></div>
<div class="a" style="left:307px;top:141px;width:20px;height:8px;background:#f0f0f0"></div>
<div class="t" style="left:309px;top:143.3px;font-size:6.6px;color:#111;font-weight:bold">Axis</div>
<div class="a" style="left:303.8px;top:194.8px;width:137px;height:49.2px;border:0.6px solid #dcdcdc;border-radius:1px"></div>
<div class="a" style="left:307px;top:190px;width:30px;height:8px;background:#f0f0f0"></div>
<div class="t" style="left:308.6px;top:192.1px;font-size:6.6px;color:#111;font-weight:bold">Format</div>
<div class="a" style="left:304px;top:253.2px;width:136.5px;height:51.3px;border:0.6px solid #dcdcdc;border-radius:1px"></div>
<div class="a" style="left:307px;top:248px;width:52px;height:8px;background:#f0f0f0"></div>
<div class="t" style="left:309px;top:250.3px;font-size:6.6px;color:#111;font-weight:bold">Filling method</div>
<div class="a" style="left:304px;top:312.6px;width:136.5px;height:60px;border:0.6px solid #dcdcdc;border-radius:1px"></div>
<div class="a" style="left:307px;top:308px;width:22px;height:8px;background:#f0f0f0"></div>
<div class="t" style="left:309px;top:310.1px;font-size:6.6px;color:#111;font-weight:bold">Type</div>

<!-- axis icons -->
<div class="a" style="left:312.3px;top:156.7px;width:12.7px;height:23.3px;background:#fafafa"></div>
<svg class="a" style="left:312px;top:156.5px" width="13" height="24">
<g fill="#bdb4a2" stroke="#9a9080" stroke-width="0.35"><path d="M6.5 0.7L8.2 2.6L7.5 2.6V4.8H5.5V2.6H4.8Z"/><path d="M6.5 11.7L8.2 9.8H7.5V7.6H5.5V9.8H4.8Z"/><path d="M0.5 6.2L2.4 4.5V5.2H4.6V7.2H2.4V7.9Z"/><path d="M12.5 6.2L10.6 4.5V5.2H8.4V7.2H10.6V7.9Z"/></g>
<circle cx="6.5" cy="18" r="4.1" fill="none" stroke="#f0bc20" stroke-width="2.2"/>
<path d="M3.2 15.6L4.6 17M9.8 20.4L8.4 19" stroke="#fafafa" stroke-width="1"/>
<path d="M5.8 15.8L7.6 17.4L6.3 18.1L7.4 20.2L5.2 18.5L6.5 17.8Z" fill="#fff"/>
</svg>
<!-- spinboxes -->
<div class="a" style="left:331.7px;top:156.8px;width:31.6px;height:8.7px;background:#fff;border-bottom:0.6px solid #bfbfbf"></div>
<div class="a" style="left:356px;top:156.8px;width:7.3px;height:8.7px;background:#e8e8e8;border-left:0.5px solid #d0d0d0"></div>
<div class="a" style="left:367.5px;top:156.8px;width:31.3px;height:8.7px;background:#fff;border-bottom:0.6px solid #bfbfbf"></div>
<div class="a" style="left:391.5px;top:156.8px;width:7.3px;height:8.7px;background:#e8e8e8;border-left:0.5px solid #d0d0d0"></div>
<div class="a" style="left:403.3px;top:156.8px;width:31.3px;height:8.7px;background:#fff;border-bottom:0.6px solid #bfbfbf"></div>
<div class="a" style="left:427.3px;top:156.8px;width:7.3px;height:8.7px;background:#e8e8e8;border-left:0.5px solid #d0d0d0"></div>
<div class="a" style="left:331.7px;top:171.7px;width:31.6px;height:8.9px;background:#fff;border-bottom:0.6px solid #bfbfbf"></div>
<div class="a" style="left:356px;top:171.7px;width:7.3px;height:8.9px;background:#e8e8e8;border-left:0.5px solid #d0d0d0"></div>
<div class="a" style="left:367.5px;top:171.7px;width:31.3px;height:8.9px;background:#fff;border-bottom:0.6px solid #bfbfbf"></div>
<div class="a" style="left:391.5px;top:171.7px;width:7.3px;height:8.9px;background:#e8e8e8;border-left:0.5px solid #d0d0d0"></div>
<div class="a" style="left:403.3px;top:171.7px;width:31.3px;height:8.9px;background:#fff;border-bottom:0.6px solid #bfbfbf"></div>
<div class="a" style="left:427.3px;top:171.7px;width:7.3px;height:8.9px;background:#e8e8e8;border-left:0.5px solid #d0d0d0"></div>
<div class="t" style="left:333px;top:159.4px;font-size:6.5px;color:#222">-33</div>
<div class="t" style="left:369px;top:159.4px;font-size:6.5px;color:#222">-9</div>
<div class="t" style="left:404.8px;top:159.4px;font-size:6.5px;color:#222">548</div>
<div class="t" style="left:333px;top:174.4px;font-size:6.5px;color:#222">0.00</div>
<div class="t" style="left:369px;top:174.4px;font-size:6.5px;color:#222">0.00</div>
<div class="t" style="left:404.8px;top:174.4px;font-size:6.5px;color:#222">90.00</div>
<svg class="a" style="left:356px;top:156.8px" width="8" height="9"><path d="M1.9 3.9L3.65 1.6L5.4 3.9ZM1.9 5L3.65 7.3L5.4 5Z" fill="#2a2a2a"/></svg>
<svg class="a" style="left:391.5px;top:156.8px" width="8" height="9"><path d="M1.9 3.9L3.65 1.6L5.4 3.9ZM1.9 5L3.65 7.3L5.4 5Z" fill="#2a2a2a"/></svg>
<svg class="a" style="left:427.3px;top:156.8px" width="8" height="9"><path d="M1.9 3.9L3.65 1.6L5.4 3.9ZM1.9 5L3.65 7.3L5.4 5Z" fill="#2a2a2a"/></svg>
<svg class="a" style="left:356px;top:171.7px" width="8" height="9"><path d="M1.9 3.9L3.65 1.6L5.4 3.9ZM1.9 5L3.65 7.3L5.4 5Z" fill="#2a2a2a"/></svg>
<svg class="a" style="left:391.5px;top:171.7px" width="8" height="9"><path d="M1.9 3.9L3.65 1.6L5.4 3.9ZM1.9 5L3.65 7.3L5.4 5Z" fill="#2a2a2a"/></svg>
<svg class="a" style="left:427.3px;top:171.7px" width="8" height="9"><path d="M1.9 3.9L3.65 1.6L5.4 3.9ZM1.9 5L3.65 7.3L5.4 5Z" fill="#2a2a2a"/></svg>

<!-- format -->
<div class="t" style="left:309px;top:207.7px;font-size:5.8px;color:#1e1e1e;-webkit-text-stroke:0.08px #222">Number of slices</div>
<div class="a" style="left:354.4px;top:204.6px;width:80.6px;height:8.8px;background:#fff;border-bottom:0.6px solid #bfbfbf"></div>
<div class="a" style="left:427.5px;top:204.6px;width:7.5px;height:8.8px;background:#e8e8e8;border-left:0.5px solid #d0d0d0"></div>
<svg class="a" style="left:427.5px;top:204.6px" width="8" height="9"><path d="M2 3.9L3.75 1.6L5.5 3.9ZM2 5L3.75 7.3L5.5 5Z" fill="#2a2a2a"/></svg>
<div class="t" style="left:356px;top:207.3px;font-size:6.5px;color:#222">100</div>
<div class="t" style="left:309px;top:220.6px;font-size:5.8px;color:#1e1e1e;-webkit-text-stroke:0.08px #222">Number of rows</div>
<div class="a" style="left:354.4px;top:217.6px;width:80.6px;height:9.8px;background:#fff;border:0.5px solid #d8d8d8;border-radius:1px"></div>
<div class="t" style="left:356px;top:220.6px;font-size:6.5px;color:#222">90</div>
<svg class="a" style="left:429px;top:220.5px" width="5" height="4"><path d="M0.3 0.5H4.3L2.3 2.9Z" fill="#222"/></svg>
<div class="a" style="left:309px;top:231.8px;width:7px;height:7px;background:#fff;border:0.6px solid #7a7a7a;border-radius:1.2px"></div>
<div class="t" style="left:318.5px;top:233.5px;font-size:5.8px;color:#1e1e1e;-webkit-text-stroke:0.08px #222">Set first slice to 0 z level.</div>

<!-- filling method -->
<div class="t" style="left:386.7px;top:263.6px;font-size:5.8px;color:#1e1e1e;-webkit-text-stroke:0.08px #222">Up</div>
<div class="t" style="left:412.5px;top:263.6px;font-size:5.8px;color:#1e1e1e;-webkit-text-stroke:0.08px #222">Down</div>
<div class="t" style="left:309px;top:275.1px;font-size:5.8px;color:#1e1e1e;-webkit-text-stroke:0.08px #222">Interpolate</div>
<div class="t" style="left:309px;top:284.8px;font-size:5.8px;color:#1e1e1e;-webkit-text-stroke:0.08px #222">Towards bounding box</div>
<div class="t" style="left:309px;top:295.0px;font-size:5.8px;color:#1e1e1e;-webkit-text-stroke:0.08px #222">Towards axis</div>
<div class="a" style="left:386.8px;top:273px;width:7.2px;height:7.2px;border-radius:50%;border:2px solid #1a64b8;background:#fff"></div>
<div class="a" style="left:413px;top:273px;width:7.2px;height:7.2px;border-radius:50%;border:2px solid #1a64b8;background:#fff"></div>
<div class="a" style="left:386.8px;top:282.7px;width:7.2px;height:7.2px;border-radius:50%;border:0.6px solid #6a6a6a;background:#f8f8f8"></div>
<div class="a" style="left:413px;top:282.7px;width:7.2px;height:7.2px;border-radius:50%;border:0.6px solid #6a6a6a;background:#f8f8f8"></div>
<div class="a" style="left:386.8px;top:292.8px;width:7.2px;height:7.2px;border-radius:50%;border:0.6px solid #6a6a6a;background:#f8f8f8"></div>
<div class="a" style="left:413px;top:292.8px;width:7.2px;height:7.2px;border-radius:50%;border:0.6px solid #6a6a6a;background:#f8f8f8"></div>

<!-- type -->
<div class="a" style="left:308.9px;top:323.3px;width:7.2px;height:7.2px;border-radius:50%;border:2px solid #1a64b8;background:#fff"></div>
<div class="a" style="left:308.9px;top:335.7px;width:7.2px;height:7.2px;border-radius:50%;border:0.6px solid #6a6a6a;background:#f8f8f8"></div>
<div class="a" style="left:308.9px;top:348.1px;width:7.2px;height:7.2px;border-radius:50%;border:0.6px solid #6a6a6a;background:#f8f8f8"></div>
<div class="a" style="left:308.9px;top:360.2px;width:7.2px;height:7.2px;border-radius:50%;border:0.6px solid #6a6a6a;background:#f8f8f8"></div>
<div class="a" style="left:363.4px;top:323.3px;width:7.2px;height:7.2px;border-radius:50%;border:0.6px solid #6a6a6a;background:#f8f8f8"></div>
<div class="a" style="left:363.4px;top:335.7px;width:7.2px;height:7.2px;border-radius:50%;border:0.6px solid #6a6a6a;background:#f8f8f8"></div>
<div class="a" style="left:363.4px;top:348.1px;width:7.2px;height:7.2px;border-radius:50%;border:0.6px solid #6a6a6a;background:#f8f8f8"></div>
<div class="a" style="left:363.4px;top:360.2px;width:7.2px;height:7.2px;border-radius:50%;border:0.6px solid #6a6a6a;background:#f8f8f8"></div>
<div class="t" style="left:318.8px;top:325.3px;font-size:5.8px;color:#1e1e1e;-webkit-text-stroke:0.08px #222">AK</div>
<div class="t" style="left:318.8px;top:337.7px;font-size:5.8px;color:#1e1e1e;-webkit-text-stroke:0.08px #222">BK</div>
<div class="t" style="left:318.8px;top:350.1px;font-size:5.8px;color:#1e1e1e;-webkit-text-stroke:0.08px #222">Cosmetic cover</div>
<div class="t" style="left:318.8px;top:362.2px;font-size:5.8px;color:#1e1e1e;-webkit-text-stroke:0.08px #222">Leg</div>
<div class="t" style="left:373.3px;top:325.3px;font-size:5.8px;color:#1e1e1e;-webkit-text-stroke:0.08px #222">Trunk</div>
<div class="t" style="left:373.3px;top:337.7px;font-size:5.8px;color:#1e1e1e;-webkit-text-stroke:0.08px #222">Seat</div>
<div class="t" style="left:373.3px;top:350.1px;font-size:5.8px;color:#1e1e1e;-webkit-text-stroke:0.08px #222">Neck brace</div>
<div class="t" style="left:373.3px;top:362.2px;font-size:5.8px;color:#1e1e1e;-webkit-text-stroke:0.08px #222">Other</div>

<!-- buttons -->
<div class="a" style="left:307px;top:398.5px;width:39.2px;height:11.5px;background:#fdfdfd;border:0.9px solid #6aa6e0;border-radius:1.5px"></div>
<div class="t" style="left:307px;top:403px;width:39.2px;text-align:center;font-size:5.9px;color:#222">Preview</div>
<div class="a" style="left:353.3px;top:398.5px;width:38.4px;height:11.5px;background:#fdfdfd;border:0.6px solid #d0d0d0;border-radius:1.5px"></div>
<div class="t" style="left:353.3px;top:403px;width:38.4px;text-align:center;font-size:5.9px;color:#222">Close</div>
<div class="a" style="left:399px;top:398.5px;width:38.7px;height:11.5px;background:#fdfdfd;border:0.6px solid #d0d0d0;border-radius:1.5px"></div>
<div class="t" style="left:399px;top:403px;width:38.7px;text-align:center;font-size:5.9px;color:#222">Export</div>

<!-- dialog viewport -->
<div class="a" style="left:449px;top:137px;width:265px;height:288.5px;background:#52586d;overflow:hidden">
</div>
<!-- ===== DIALOG VIEWPORT CONTENT ===== -->
<svg class="a" style="left:449px;top:136.5px" width="265" height="289" viewBox="449 136.5 265 289">
 <rect x="560.2" y="179.4" width="43" height="222.6" fill="none" stroke="#e8eaf0" stroke-width="0.8"/>
 <path d="M561.00 180.00C561.1 181.7 561.2 186.7 561.5 190.0C561.8 193.3 562.9 196.7 563.0 200.0C563.1 203.3 562.1 207.0 562.0 210.0C561.9 213.0 562.2 214.7 562.3 218.0C562.4 221.3 562.5 224.7 562.8 230.0C563.1 235.3 563.0 243.3 563.9 250.0C564.8 256.7 567.3 264.5 568.0 270.0C568.7 275.5 568.3 278.8 568.0 283.0C567.7 287.2 566.9 290.5 566.4 295.0C565.9 299.5 565.3 305.0 565.3 310.0C565.3 315.0 565.6 318.3 566.4 325.0C567.2 331.7 569.1 342.2 570.0 350.0C570.9 357.8 571.7 366.5 572.0 372.0C572.3 377.5 572.8 380.0 572.0 383.0C571.2 386.0 568.2 387.8 567.0 390.0C565.8 392.2 565.2 394.2 565.0 396.0C564.8 397.8 565.8 399.8 566.0 400.5L587.20 400.50C587.2 399.8 587.3 397.8 587.2 396.0C587.1 394.2 587.0 392.2 586.5 390.0C586.0 387.8 585.0 386.0 584.5 383.0C584.0 380.0 583.7 377.5 583.5 372.0C583.3 366.5 583.0 357.8 583.5 350.0C584.0 342.2 585.6 331.7 586.4 325.0C587.2 318.3 588.0 315.0 588.2 310.0C588.4 305.0 587.0 299.5 587.5 295.0C588.0 290.5 589.9 287.2 591.0 283.0C592.1 278.8 593.4 275.5 594.2 270.0C595.0 264.5 595.3 256.7 595.8 250.0C596.3 243.3 596.5 235.3 597.2 230.0C597.9 224.7 599.2 221.3 600.0 218.0C600.8 214.7 601.5 213.0 601.7 210.0C602.0 207.0 601.5 203.3 601.5 200.0C601.5 196.7 601.7 193.3 601.7 190.0C601.7 186.7 601.7 181.7 601.7 180.0Z" fill="url(#legg)"/>
 <path d="M562 196Q578 206 600 206" fill="none" stroke="#9a9a9a" stroke-width="2" opacity="0.45"/>
 <path d="M572 383.5Q578 385 584.5 383Q587 390 587.2 395H565Q566.5 389 572 383.5Z" fill="#3c3c3c"/><path d="M570 387Q578 389 585.5 387" stroke="#8a8a8a" stroke-width="0.8" fill="none"/>
 <path d="M565 395H587.2V400.5H566Q564.5 398 565 395Z" fill="#cfcfcf"/>
 <path d="M565.5 400H587" stroke="#555" stroke-width="0.8"/>
 <g fill="#2a2ae0"><circle cx="561" cy="203" r="0.9"/><circle cx="599" cy="219" r="0.9"/><circle cx="579.5" cy="238.6" r="0.9"/><circle cx="579" cy="279" r="0.9"/><circle cx="577.6" cy="301.6" r="0.9"/><circle cx="577.5" cy="329.6" r="0.9"/><circle cx="577.5" cy="353" r="0.9"/><circle cx="578" cy="382" r="0.9"/><circle cx="570" cy="397" r="0.7"/><circle cx="586" cy="397" r="0.7"/></g>
 <path d="M515.3 396.3V384" stroke="#2ec43a" stroke-width="1.6"/>
 <path d="M513.4 386L515.3 382.5L517.2 386Z" fill="#2ec43a"/>
 <path d="M515.3 396.3H529" stroke="#d0303a" stroke-width="1.4"/>
 <circle cx="515.3" cy="396.3" r="1.2" fill="#8a5a30"/>
</svg>
<svg class="a" style="left:452.5px;top:140.2px" width="12.4" height="11.6"><rect x="0" y="0" width="12.2" height="11.4" fill="#3a3e4e"/><rect x="1.8" y="1.6" width="8.6" height="8.2" rx="2" fill="#e2eaf2"/><path d="M3 4.5H9.2M3 7H9.2" stroke="#b8c8e0" stroke-width="0.5"/><circle cx="2" cy="1.8" r="1" fill="#d02848"/><circle cx="10.2" cy="1.8" r="1" fill="#d02848"/><circle cx="2" cy="9.6" r="1" fill="#d02848"/><circle cx="10.2" cy="9.6" r="1" fill="#d02848"/></svg>
<div class="lb" style="left:549.4px;top:189.8px">TROC</div>
<div class="lb lf" style="left:592px;top:206px;opacity:.85">PERI</div>
<div class="lb" style="left:569px;top:226px">MIDL</div>
<div class="lb" style="left:558.3px;top:266.8px">Over_Pat</div>
<div class="lb" style="left:568.5px;top:278.8px">KNEE</div>
<div class="lb" style="left:552.4px;top:288.3px">Under_Pat</div>
<div class="lb" style="left:566px;top:316.9px">MIDU</div>
<div class="lb" style="left:563.2px;top:340.2px">A_Calf</div>
<div class="lb" style="left:567.3px;top:362.8px">ANKL</div>
<div class="lb lf" style="left:568px;top:369.5px;font-size:6px;opacity:.75">Mmet</div>
<div class="lb" style="left:523.3px;top:373.8px">pos_medioPied_haut</div>
<div class="lb lf" style="left:518px;top:386.3px;opacity:.75">pos_medioPied_bas</div>
<div class="lb" style="left:548px;top:383.3px;opacity:.7">M_MetaTarsTS1</div>
<div class="t" style="left:507px;top:377.3px;font-size:5.5px;color:#e8e8e8;font-style:italic">Z</div>
<div class="t" style="left:507px;top:385px;font-size:5.5px;color:#e8e8e8;font-style:italic">X</div>
<div class="t" style="left:527.7px;top:385px;font-size:5.5px;color:#e8e8e8;font-style:italic">Y</div>
<!-- cursor -->
<svg class="a" style="left:478.3px;top:342.8px" width="8" height="11"><path d="M0.5 0.5V9L2.6 7.2L4 10.3L5.3 9.7L4 6.7H6.8Z" fill="#fff" stroke="#111" stroke-width="0.6"/></svg>
<!-- ===== TASKBAR ===== -->
<div class="a" style="left:0;top:550px;width:1024px;height:26px;background:#212121"></div>
<svg class="a" style="left:411.5px;top:556.5px" width="14" height="14"><rect x="0.3" y="0.3" width="6.3" height="6.3" fill="#3fb4f0"/><rect x="7.2" y="0.3" width="6.3" height="6.3" fill="#3cb0ee"/><rect x="0.3" y="7.2" width="6.3" height="6.3" fill="#2a9ae4"/><rect x="7.2" y="7.2" width="6.3" height="6.3" fill="#2890e0"/></svg>
<svg class="a" style="left:436px;top:557px" width="13" height="13"><circle cx="7.5" cy="5" r="3.8" fill="#3a3a3a" stroke="#d4d4d4" stroke-width="1.1"/><path d="M4.7 7.8L1.2 11.5" stroke="#d4d4d4" stroke-width="1.3" stroke-linecap="round"/></svg>
<svg class="a" style="left:459px;top:557px" width="14" height="13"><rect x="0.5" y="4" width="9" height="8" rx="0.8" fill="#5a5a5a"/><rect x="3.8" y="0.5" width="9.2" height="8.5" rx="0.8" fill="#e8e8e8"/><rect x="3.8" y="4" width="5.7" height="5" fill="#9a9a9a"/></svg>
<svg class="a" style="left:482.5px;top:557px" width="13" height="13"><rect x="0.3" y="0.3" width="12.4" height="12.4" fill="#1a6ecc"/><rect x="1.3" y="1.3" width="4.3" height="10.4" fill="#f0f0f0"/><rect x="6.6" y="1.3" width="5" height="5" fill="#5cc8f4"/><rect x="6.6" y="7" width="5" height="4.7" fill="#3aa8e8"/></svg>
<svg class="a" style="left:505.5px;top:557px" width="14" height="13"><circle cx="7" cy="6.5" r="6" fill="#6a6ad8"/><rect x="3.5" y="4.5" width="5.2" height="4" rx="0.8" fill="#fff"/><path d="M8.7 5.5L11 4.5V8.5L8.7 7.5Z" fill="#fff"/></svg>
<svg class="a" style="left:529px;top:557px" width="14" height="16"><path d="M0.5 1.5H5L6.3 2.8H13.5V11.5H0.5Z" fill="#f0c040"/><rect x="0.5" y="3.8" width="13" height="7.7" fill="#f5c84c"/><rect x="4" y="8.2" width="6" height="3.3" fill="#1e88d8"/><rect x="5.8" y="14.6" width="2.4" height="0.8" fill="#aaa"/></svg>
<svg class="a" style="left:552.5px;top:556.5px" width="14" height="14"><defs><linearGradient id="edg" x1="0" y1="1" x2="1" y2="0"><stop offset="0" stop-color="#1a5fc0"/><stop offset="0.5" stop-color="#2a90e0"/><stop offset="1" stop-color="#40d070"/></linearGradient></defs><circle cx="7" cy="7" r="6.5" fill="url(#edg)"/><path d="M1 8Q2 3 7 3Q11.5 3 12 6.5Q10 5 7.5 5.5Q5 6.5 6 9.5Q7.5 12 11.5 11.2Q9 13.5 6 13.2Q1.5 12 1 8Z" fill="#1e50a8" opacity="0.85"/><path d="M12.5 6.5Q13 10 10 11Q7.5 11.5 6.8 9.5Q7 7.5 9 7.3Q11 7.3 12.5 6.5Z" fill="#4ad060"/></svg>
<svg class="a" style="left:576px;top:556.5px" width="14" height="14"><path d="M4.5 3.5V2Q4.5 0.8 7 0.8Q9.5 0.8 9.5 2V3.5" fill="none" stroke="#eee" stroke-width="0.9"/><rect x="0.5" y="3.5" width="13" height="9.8" rx="0.8" fill="#f2f2f2"/><rect x="4.5" y="6" width="2.3" height="2.3" fill="#e84a2a"/><rect x="7.2" y="6" width="2.3" height="2.3" fill="#7cc030"/><rect x="4.5" y="8.7" width="2.3" height="2.3" fill="#1ea0e8"/><rect x="7.2" y="8.7" width="2.3" height="2.3" fill="#f8b81a"/></svg>
<div class="a" style="left:596.2px;top:552px;width:21px;height:21.8px;border-radius:2.5px;background:#2d2d2d"></div>
<svg class="a" style="left:599.5px;top:556px" width="14" height="14"><rect x="0.3" y="0.3" width="13.4" height="13.4" rx="1.5" fill="#32475a"/><circle cx="7" cy="6.5" r="5.5" fill="#6d8aa6"/><path d="M2 9.5H12" stroke="#bcd" stroke-width="0.7"/><rect x="2" y="10.6" width="10" height="1.5" fill="#c4d0dc" opacity="0.8"/></svg>
<div class="a" style="left:602px;top:572.2px;width:9.5px;height:1.2px;border-radius:1px;background:#c8c8e8"></div>
<svg class="a" style="left:903px;top:561px" width="8" height="5"><path d="M0.8 4.2L3.8 1L6.8 4.2" fill="none" stroke="#ddd" stroke-width="0.8"/></svg>
<div class="t" style="left:918.5px;top:560.5px;font-size:6px;color:#e8e8e8">ENG</div>
<svg class="a" style="left:939.5px;top:557.5px" width="11" height="11"><rect x="0.6" y="1.5" width="7.5" height="6" rx="0.6" fill="none" stroke="#ddd" stroke-width="0.8"/><path d="M2.5 9.5H6.5M4.3 7.5V9.5" stroke="#ddd" stroke-width="0.8"/><circle cx="8.3" cy="2" r="1.5" fill="#ddd"/></svg>
<svg class="a" style="left:952.5px;top:558.5px" width="10" height="10"><path d="M0.8 3.5H2.8L5.3 1.2V8.8L2.8 6.5H0.8Z" fill="none" stroke="#ddd" stroke-width="0.7"/><path d="M6.8 3.2Q7.8 5 6.8 6.8M8.2 2.2Q9.8 5 8.2 7.8" fill="none" stroke="#ddd" stroke-width="0.6"/></svg>
<div class="t" style="left:968px;top:556.1px;width:31px;text-align:right;font-size:6.1px;color:#f0f0f0">1:18 PM</div>
<div class="t" style="left:968px;top:564.6px;width:31px;text-align:right;font-size:6.4px;color:#f0f0f0">12/5/2025</div>
<svg class="a" style="left:1004.5px;top:559.5px" width="9" height="9"><circle cx="4.5" cy="4.5" r="4" fill="#d2d2f2"/><path d="M3.5 2.8L4.8 2V7" fill="none" stroke="#333" stroke-width="0.8"/></svg>
</body></html>
